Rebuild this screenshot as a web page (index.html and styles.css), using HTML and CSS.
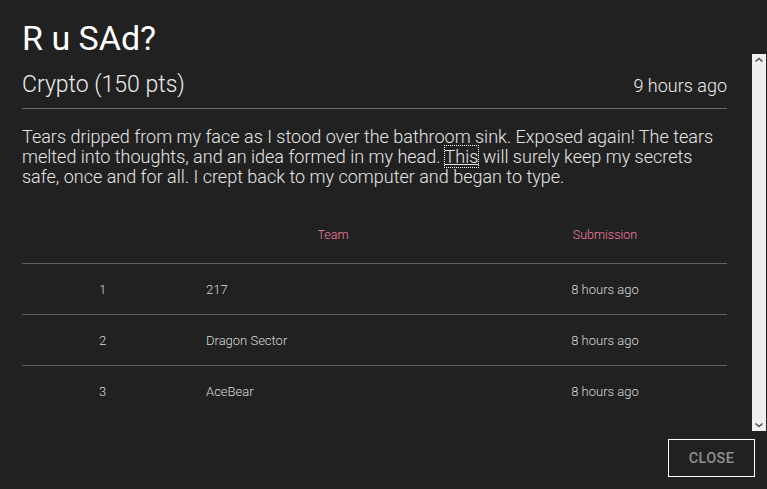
FILE: index.html
```html
<!DOCTYPE html>
<html>
<head>
<meta charset="utf-8">
<link rel="stylesheet" href="styles.css">
</head>
<body>
<div class="modal">
  <div class="content">
    <h1 class="title">R u SAd?</h1>
    <div class="meta">
      <span class="cat">Crypto (150 pts)</span>
      <span class="time">9 hours ago</span>
    </div>
    <p class="desc">Tears dripped from my face as I stood over the bathroom sink. Exposed again! The tears melted into thoughts, and an idea formed in my head. <a class="link" href="#">This</a> will surely keep my secrets safe, once and for all. I crept back to my computer and began to type.</p>
    <div class="table">
      <div class="row head">
        <div class="c1"></div>
        <div class="c2">Team</div>
        <div class="c3">Submission</div>
      </div>
      <div class="row">
        <div class="c1">1</div>
        <div class="c2 left">217</div>
        <div class="c3">8 hours ago</div>
      </div>
      <div class="row">
        <div class="c1">2</div>
        <div class="c2 left">Dragon Sector</div>
        <div class="c3">8 hours ago</div>
      </div>
      <div class="row last">
        <div class="c1">3</div>
        <div class="c2 left">AceBear</div>
        <div class="c3">8 hours ago</div>
      </div>
    </div>
  </div>
  <div class="footer">
    <button class="close">CLOSE</button>
  </div>
  <div class="scrollbar">
    <svg class="arrow up" width="14" height="12" viewBox="0 0 14 12"><path d="M3.5 7.5 L7 4.5 L10.5 7.5" fill="none" stroke="#505050" stroke-width="1.6"/></svg>
    <svg class="arrow down" width="14" height="12" viewBox="0 0 14 12"><path d="M3.5 4.5 L7 7.5 L10.5 4.5" fill="none" stroke="#505050" stroke-width="1.6"/></svg>
  </div>
</div>
</body>
</html>
```
FILE: styles.css
```css
html, body {
  margin: 0;
  padding: 0;
  background: #212121;
  width: 767px;
  height: 489px;
  overflow: hidden;
}
body {
  font-family: Roboto, "Liberation Sans", sans-serif;
  color: #fff;
}
.modal {
  position: relative;
  width: 767px;
  height: 489px;
}
.content {
  padding: 16px 40px 0 22px;
  box-sizing: border-box;
  height: 431px;
}
.title {
  margin: 0;
  font-size: 34px;
  line-height: 44px;
  font-weight: 400;
  color: #fff;
}
.meta {
  margin-top: 10px;
  display: flex;
  justify-content: space-between;
  align-items: baseline;
  line-height: 30px;
  font-weight: 300;
  color: #eee;
  padding-bottom: 7px;
  border-bottom: 1px solid #6a6a6a;
}
.cat {
  font-size: 23px;
}
.time {
  font-size: 18px;
}
.desc {
  margin: 18px 0 0 0;
  font-size: 18px;
  line-height: 20px;
  font-weight: 300;
  color: #e6e6e6;
}
.link {
  color: #e6e6e6;
  text-decoration: underline;
  outline: 1px dotted #fff;
  outline-offset: 0;
}
.table {
  margin-top: 26px;
  font-size: 13px;
  font-weight: 300;
  color: #dadada;
}
.row {
  display: grid;
  grid-template-columns: 161px 300px 244px;
  height: 51px;
  align-items: center;
  border-bottom: 1px solid #606060;
  box-sizing: border-box;
}
.row.last {
  border-bottom: none;
}
.head {
  color: #f77fa8;
  font-size: 12.5px;
  padding-bottom: 8px;
}
.c1, .c2, .c3 {
  text-align: center;
}
.c2.left {
  text-align: left;
  padding-left: 23px;
}
.footer {
  display: flex;
  justify-content: flex-end;
  padding: 8px 12px 0 0;
}
.close {
  width: 87px;
  height: 38px;
  background: transparent;
  border: 1px solid #fff;
  border-radius: 0;
  color: #8f8f8f;
  font-family: Roboto, "Liberation Sans", sans-serif;
  font-size: 14.5px;
  font-weight: 500;
  letter-spacing: 0.3px;
  padding: 0;
}
.scrollbar {
  position: absolute;
  right: 1px;
  top: 54px;
  width: 14px;
  height: 377px;
  background: #efefef;
}
.arrow {
  position: absolute;
  left: 0;
}
.arrow.up { top: 0; }
.arrow.down { bottom: 0; }
```
